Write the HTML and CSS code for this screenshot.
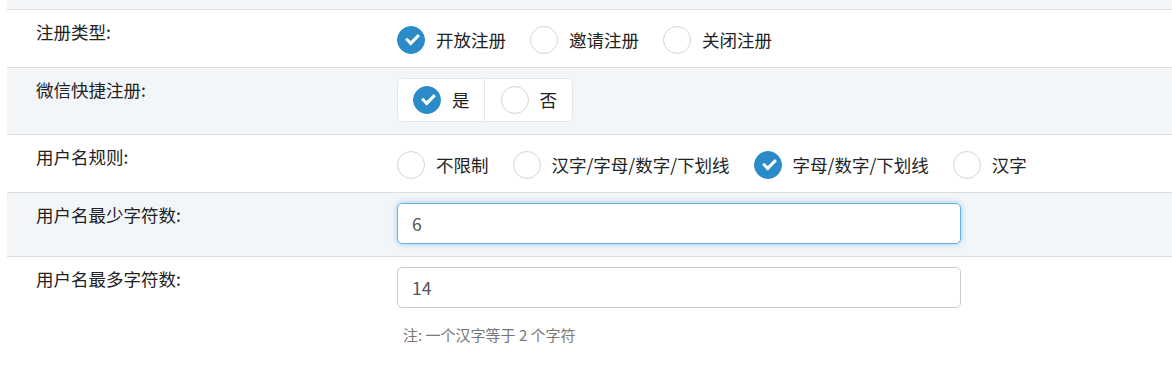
FILE: index.html
```html
<!DOCTYPE html>
<html lang="zh-CN">
<head>
    <meta charset="UTF-8">
    <meta name="viewport" content="width=device-width, initial-scale=1.0">
    <title>注册设置</title>
    <link rel="stylesheet" href="styles.css">
</head>
<body>
    <div class="settings">
        <div class="row row-alt row-top"></div>

        <div class="row">
            <div class="label">注册类型:</div>
            <div class="field">
                <div class="radios">
                    <label class="radio checked"><span class="dot"></span>开放注册</label>
                    <label class="radio"><span class="dot"></span>邀请注册</label>
                    <label class="radio"><span class="dot"></span>关闭注册</label>
                </div>
            </div>
        </div>

        <div class="row row-alt">
            <div class="label">微信快捷注册:</div>
            <div class="field">
                <div class="btn-group">
                    <label class="radio checked"><span class="dot"></span>是</label>
                    <label class="radio"><span class="dot"></span>否</label>
                </div>
            </div>
        </div>

        <div class="row">
            <div class="label">用户名规则:</div>
            <div class="field">
                <div class="radios">
                    <label class="radio"><span class="dot"></span>不限制</label>
                    <label class="radio"><span class="dot"></span>汉字/字母/数字/下划线</label>
                    <label class="radio checked"><span class="dot"></span>字母/数字/下划线</label>
                    <label class="radio"><span class="dot"></span>汉字</label>
                </div>
            </div>
        </div>

        <div class="row row-alt">
            <div class="label">用户名最少字符数:</div>
            <div class="field">
                <input type="text" class="input focus" value="6">
            </div>
        </div>

        <div class="row">
            <div class="label">用户名最多字符数:</div>
            <div class="field">
                <input type="text" class="input" value="14">
                <p class="help">注: 一个汉字等于 2 个字符</p>
            </div>
        </div>
    </div>
</body>
</html>
```

FILE: styles.css
```css
/* 注册设置 */
* {
    margin: 0;
    padding: 0;
    box-sizing: border-box;
}

body {
    font-family: "Noto Sans CJK SC", "Noto Sans", sans-serif;
    font-size: 17.5px;
    color: #222;
    background-color: #fff;
}

.settings {
    margin-left: 7px;
}

.row {
    display: flex;
    padding: 10px 0 12px 29px;
    border-bottom: 1px solid #dedede;
    background-color: #fff;
}

.row-alt {
    background-color: #f3f6f9;
}

.row-top {
    height: 10px;
    padding: 0;
}

.label {
    width: 361px;
    flex-shrink: 0;
    line-height: 24px;
}

.field {
    flex: 1;
}

.radios {
    display: flex;
    align-items: center;
    padding: 6px 0 1px;
}

.radio {
    display: flex;
    align-items: center;
    height: 28px;
    margin-right: 24px;
    line-height: 24px;
    cursor: pointer;
}

.dot {
    width: 28px;
    height: 28px;
    border-radius: 50%;
    border: 1.5px solid #d9d4cf;
    background-color: #fff;
    margin-right: 11px;
    position: relative;
    flex-shrink: 0;
}

.radio.checked .dot {
    border-color: #2b8bc9;
    background-color: #2b8bc9;
}

.radio.checked .dot::after {
    content: "";
    position: absolute;
    left: 8px;
    top: 7px;
    width: 10px;
    height: 5px;
    border-left: 3px solid #fff;
    border-bottom: 3px solid #fff;
    transform: rotate(-45deg);
}

.btn-group {
    display: inline-flex;
    height: 44px;
    border: 1px solid #e6e6e6;
    border-radius: 5px;
    background-color: #fff;
}

.btn-group .radio {
    height: 42px;
    margin: 0;
    padding: 0 14px 0 15px;
}

.btn-group .radio + .radio {
    border-left: 1px solid #e6e6e6;
    padding: 0 15px 0 16px;
}

.input {
    display: block;
    width: 564px;
    height: 41px;
    padding: 0 14px;
    border: 1px solid #ccc;
    border-radius: 5px;
    font-family: inherit;
    font-size: 17.5px;
    color: #555;
    background-color: #fff;
    outline: none;
}

.input.focus {
    border-color: #66afe9;
    box-shadow: 0 0 6px rgba(102, 175, 233, 0.6);
}

.help {
    margin: 18px 0 19px 6px;
    font-size: 15px;
    line-height: 18px;
    color: #777;
}
```
